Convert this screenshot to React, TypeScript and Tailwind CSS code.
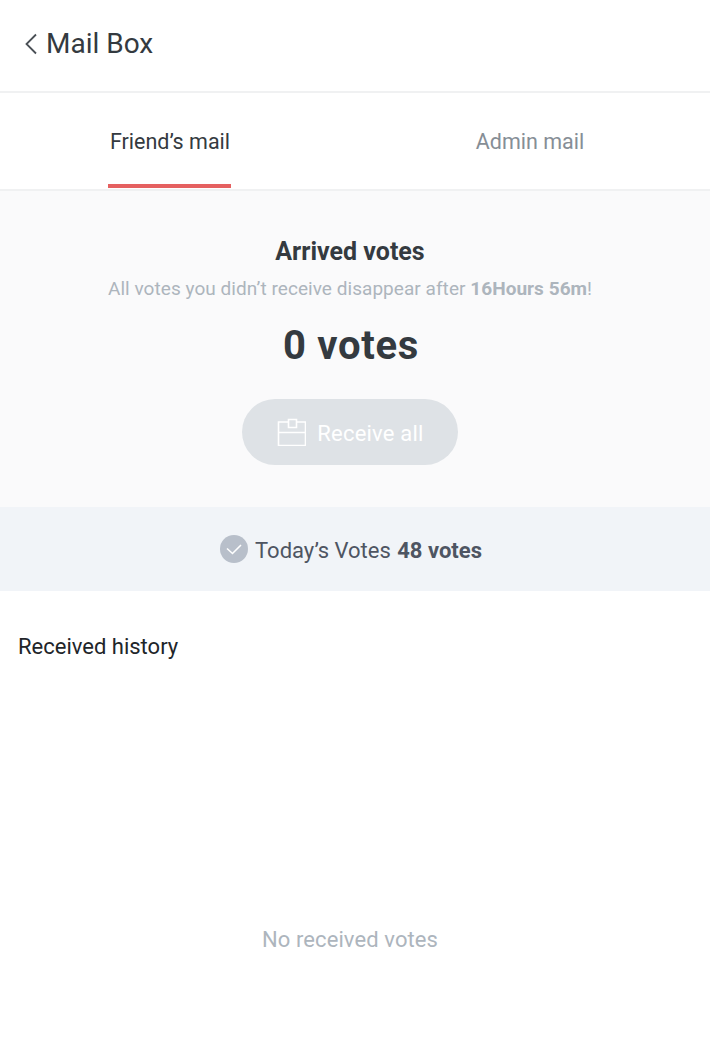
import React from 'react';

const App: React.FC = () => {
  return (
    <div className="min-h-[1064px] bg-white font-['Roboto',sans-serif]">
      {/* Header */}
      <div className="h-[93px] flex items-center pl-[24px] pb-[3px] border-b-2 border-[#f0f1f2]">
        <svg className="w-[13px] h-[22px]" viewBox="0 0 13 22" fill="none" stroke="#4a5056" strokeWidth="1.8">
          <path d="M12 1.5 2.5 11 12 20.5" />
        </svg>
        <span className="ml-[9px] text-[28px] leading-none text-[#343a40]">Mail Box</span>
      </div>

      {/* Tabs */}
      <div className="flex h-[98px] border-b-2 border-[#f0f1f2]">
        <div className="w-[339px] flex justify-center">
          <div className="w-[123px] h-[95px] border-b-4 border-[#e56060] flex justify-center pt-[35px]">
            <span className="pl-[1px] text-[21.5px] leading-[28px] text-[#343a40] whitespace-nowrap">Friend’s mail</span>
          </div>
        </div>
        <div className="w-[360px] ml-[11px] flex justify-center pt-[35px]">
          <span className="text-[21.5px] leading-[28px] text-[#868e96]">Admin mail</span>
        </div>
      </div>

      {/* Arrived votes */}
      <div className="h-[316px] w-[700px] bg-[#fafafb] flex flex-col items-center pt-[46px] shadow-[10px_0_0_#fafafb]">
        <div className="text-[25px] leading-[30px] font-bold text-[#343a40]">Arrived votes</div>
        <div className="mt-[9px] text-[19px] leading-[26px] tracking-[0.05px] text-[#adb5bd]">
          All votes you didn’t receive disappear after <span className="font-bold">16Hours 56m</span>!
        </div>
        <div className="mt-[18px] pl-[2px] text-[40px] leading-[52px] font-bold text-[#343a40] tracking-[0.7px]">0 votes</div>
        <div className="mt-[27px] w-[216px] h-[66px] rounded-full bg-[#dee2e6] flex items-center justify-center">
          <svg className="w-[30px] h-[28px]" viewBox="0 0 30 28" fill="none" stroke="#ffffff" strokeWidth="1.6">
            <path d="M12.5 4H2.5v23.5h27V4H20.5M12.5 1.5h8v8h-8zM2.5 14.5h27" />
          </svg>
          <span className="ml-[11px] pt-[3px] text-[22px] leading-none text-white tracking-[0.2px]">Receive all</span>
        </div>
      </div>

      {/* Today's votes */}
      <div className="h-[84px] w-[700px] pl-[2px] bg-[#f1f4f8] flex items-center justify-center shadow-[10px_0_0_#f1f4f8]">
        <div className="w-[28px] h-[28px] rounded-full bg-[#b8bfca] flex items-center justify-center">
          <svg className="w-[16px] h-[11px]" viewBox="0 0 16 11" fill="none" stroke="#ffffff" strokeWidth="1.6">
            <path d="M1 4.5 6.5 9.5 15 1" />
          </svg>
        </div>
        <span className="ml-[7px] pt-[4px] text-[22px] leading-none text-[#4e5562]">
          Today’s Votes <span className="ml-[1px] font-bold">48 votes</span>
        </span>
      </div>

      {/* Received history */}
      <div className="pl-[18px] pt-[41px] text-[22px] leading-[30px] text-[#212529]">Received history</div>
      <div className="w-[700px] mt-[263px] text-center text-[22px] leading-[30px] tracking-[0.1px] text-[#adb5bd]">No received votes</div>
    </div>
  );
};

export default App;
